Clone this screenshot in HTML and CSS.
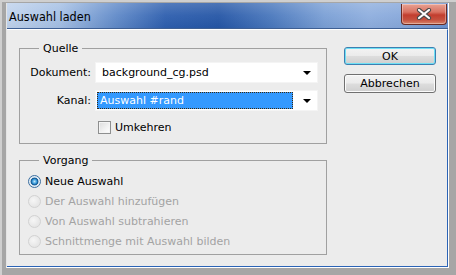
FILE: index.html
```html
<!DOCTYPE html>
<html>
<head>
<meta charset="utf-8">
<link rel="stylesheet" href="styles.css">
</head>
<body>
<div class="screen">
  <div class="window">
    <div class="titlebar">
      <span class="title">Auswahl laden</span>
      <div class="close">
        <svg width="16" height="12" viewBox="0 0 16 12">
          <path d="M3 2 L13 10 M13 2 L3 10" stroke="#4a4a4a" stroke-width="4.2" stroke-linecap="round"/>
          <path d="M3 2 L13 10 M13 2 L3 10" stroke="#ffffff" stroke-width="2.2" stroke-linecap="round"/>
        </svg>
      </div>
    </div>
    <div class="client">
      <div class="left">
        <fieldset class="group quelle">
          <legend>Quelle</legend>
          <div class="row">
            <span class="lbl">Dokument:</span>
            <div class="select"><span class="val">background_cg.psd</span><i class="arrow"></i></div>
          </div>
          <div class="row">
            <span class="lbl">Kanal:</span>
            <div class="select"><span class="val hl">Auswahl #rand</span><i class="arrow"></i></div>
          </div>
          <div class="check"><span class="cb"></span><span>Umkehren</span></div>
        </fieldset>
        <fieldset class="group vorgang">
          <legend>Vorgang</legend>
          <div class="radio"><span class="rb on"></span><span>Neue Auswahl</span></div>
          <div class="radio off"><span class="rb"></span><span>Der Auswahl hinzufügen</span></div>
          <div class="radio off"><span class="rb"></span><span>Von Auswahl subtrahieren</span></div>
          <div class="radio off"><span class="rb"></span><span>Schnittmenge mit Auswahl bilden</span></div>
        </fieldset>
      </div>
      <div class="buttons">
        <div class="btn default">OK</div>
        <div class="btn">Abbrechen</div>
      </div>
    </div>
  </div>
</div>
</body>
</html>
```

FILE: styles.css
```css
* { box-sizing: border-box; }
html, body { margin: 0; padding: 0; background: #a9a9a9; }
body { font-family: "DejaVu Sans", sans-serif; font-size: 11px; color: #000; }

.screen {
  width: 456px;
  height: 275px;
  background: #a6a6a6;
  border-top: 2px solid #cfcfcf;
  border-left: 2px solid #cfcfcf;
  padding: 1px 0 0 4px;
  overflow: hidden;
}

.window {
  width: 443px;
  border-left: 1px solid #e4e4e4;
  border-right: 1px solid #ffffff;
  border-bottom: 1px solid #ffffff;
}

.titlebar {
  height: 26px;
  display: flex;
  justify-content: space-between;
  align-items: flex-start;
  background:
    linear-gradient(180deg, rgba(255,255,255,0.18) 0%, rgba(255,255,255,0.05) 50%, rgba(0,0,0,0.03) 100%),
    linear-gradient(90deg, #bfd2ec 0%, #a4bfe4 12%, #5f89c8 25%, #2d5eae 36%, #2556a6 48%, #4a78bd 60%, #7a9fd5 72%, #8eaede 82%, #86a7da 90%, #6b92cf 100%);
  border-bottom: 1px solid #3e5f93;
}
.title {
  font-family: "DejaVu Sans Condensed", "DejaVu Sans", sans-serif;
  font-size: 12.5px;
  line-height: 14px;
  padding: 7px 0 0 2px;
  color: #000;
}
.close {
  width: 46px;
  height: 21px;
  margin: 1px 1px 0 0;
  border: 1px solid #6a2a22;
  border-top: none;
  border-radius: 0 0 4px 4px;
  background: linear-gradient(180deg, #e8a293 0%, #d97262 40%, #c23d2e 55%, #c65240 80%, #d8856a 100%);
  box-shadow: inset 0 0 0 1px rgba(255,255,255,0.35);
  display: flex;
  align-items: center;
  justify-content: center;
}

.client {
  height: 238px;
  background: #ececec;
  border-right: 1px solid #2b63b6;
  border-bottom: 1px solid #2b63b6;
  border-top: 1px solid #ffffff;
  display: flex;
  padding: 12px 0 0 12px;
  gap: 17px;
}

.left { width: 308px; display: flex; flex-direction: column; gap: 10px; }

.group {
  margin: 0;
  border: 1px solid #a0a0a0;
  padding: 0 8px;
  min-width: 0;
}
.group legend {
  padding: 0 4px;
  margin-left: 11px;
  line-height: 13px;
  font-size: 11px;
}
.quelle { padding-top: 7px; padding-bottom: 9px; }
.vorgang { padding-top: 4px; padding-bottom: 3px; }

.row { display: flex; align-items: center; gap: 4px; margin-bottom: 7px; }
.lbl { width: 63px; text-align: right; white-space: nowrap; }
.select {
  width: 223px;
  height: 21px;
  background: #ffffff;
  border: 1px solid #f4f4f4;
  display: flex;
  align-items: center;
  padding: 1px;
}
.val { flex: 1; padding-left: 5px; line-height: 17px; }
.val.hl {
  background: #3399ff;
  color: #ffffff;
  height: 17px;
  margin-right: 10px;
  padding-left: 3px;
  outline: 1px dotted #3c2a10;
  outline-offset: -1px;
}
.arrow {
  width: 0; height: 0;
  border-left: 4px solid transparent;
  border-right: 4px solid transparent;
  border-top: 4px solid #000;
  margin: 1px 5px 0 0;
}

.check { display: flex; align-items: center; gap: 4px; margin: 10px 0 0 70px; height: 13px; }
.cb {
  width: 13px; height: 13px;
  border: 1px solid #8e8f8f;
  background: linear-gradient(135deg, #dcdcdc 0%, #f2f2f2 60%, #ffffff 100%);
  box-shadow: inset 0 0 0 1px #f4f4f4;
}

.radio { display: flex; align-items: center; gap: 4px; height: 20px; white-space: nowrap; }
.radio.off { color: #a3a3a3; }
.rb {
  flex: none;
  width: 13px; height: 13px; border-radius: 50%;
  border: 1px solid #d2d2d2;
  background: radial-gradient(circle at 40% 40%, #f6f6f6 0%, #e6e6e6 70%);
}
.rb.on {
  border-color: #3c6fa0;
  background: radial-gradient(circle at 50% 50%, #bfe6fa 0%, #3a9ad9 28%, #0b4f8a 45%, #dde9f3 55%, #f3f7fa 100%);
}

.buttons { display: flex; flex-direction: column; gap: 9px; padding-top: 5px; }
.btn {
  width: 92px; height: 19px;
  border: 1px solid #707070;
  border-radius: 3px;
  background: linear-gradient(180deg, #f3f3f3 0%, #ebebeb 48%, #dddddd 52%, #cfcfcf 100%);
  box-shadow: inset 0 0 0 1px #fbfbfb;
  display: flex; align-items: center; justify-content: center;
  line-height: 13px;
}
.btn.default {
  border-color: #3c7fb1;
  box-shadow: inset 0 0 0 1px #6ee0f5;
  height: 18px;
}
```
